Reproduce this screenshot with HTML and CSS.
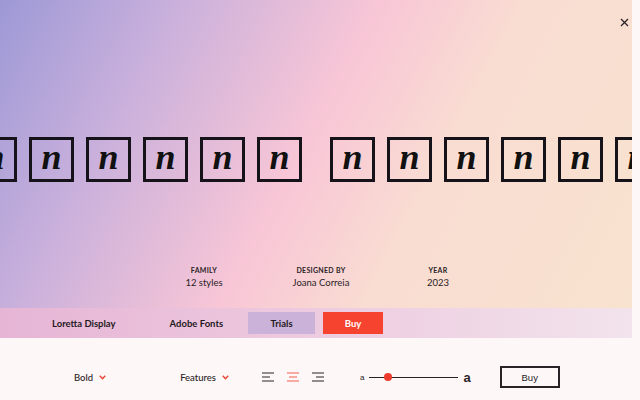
FILE: index.html
```html
<!DOCTYPE html>
<html lang="en">
<head>
  <meta charset="UTF-8" />
  <meta name="viewport" content="width=device-width, initial-scale=1.0"/>
  <title>Loretta Display</title>
  <link rel="stylesheet" href="styles.css">
</head>
<body>
  <div class="page">
    <div class="hero">
      <button class="close" aria-label="Close">
        <svg width="9" height="9" viewBox="0 0 9 9"><path d="M1 1L8 8M8 1L1 8" stroke="#2a2226" stroke-width="1.3" fill="none"/></svg>
      </button>

      <div class="glyphs">
        <div class="group">
          <span class="glyph">n</span><span class="glyph">n</span><span class="glyph">n</span>
          <span class="glyph">n</span><span class="glyph">n</span><span class="glyph">n</span>
        </div>
        <div class="group">
          <span class="glyph">n</span><span class="glyph">n</span><span class="glyph">n</span>
          <span class="glyph">n</span><span class="glyph">n</span><span class="glyph">n</span>
        </div>
      </div>

      <div class="meta">
        <div class="meta-item">
          <div class="meta-label">FAMILY</div>
          <div class="meta-value">12 styles</div>
        </div>
        <div class="meta-item">
          <div class="meta-label">DESIGNED BY</div>
          <div class="meta-value">Joana Correia</div>
        </div>
        <div class="meta-item">
          <div class="meta-label">YEAR</div>
          <div class="meta-value">2023</div>
        </div>
      </div>
    </div>

    <nav class="nav">
      <a class="nav-link name">Loretta Display</a>
      <a class="nav-link adobe">Adobe Fonts</a>
      <a class="nav-btn trials">Trials</a>
      <a class="nav-btn buy">Buy</a>
    </nav>

    <div class="toolbar">
      <div class="dropdown weight">Bold
        <svg width="7" height="5" viewBox="0 0 7 5"><path d="M0.8 0.8L3.5 3.8L6.2 0.8" stroke="#e8432f" stroke-width="1.4" fill="none"/></svg>
      </div>
      <div class="dropdown features">Features
        <svg width="7" height="5" viewBox="0 0 7 5"><path d="M0.8 0.8L3.5 3.8L6.2 0.8" stroke="#e8432f" stroke-width="1.4" fill="none"/></svg>
      </div>

      <div class="align">
        <svg width="12" height="10" viewBox="0 0 12 10"><path d="M0 1H12M0 5H8M0 9H12" stroke="#2a2226" stroke-width="1.1"/></svg>
        <svg width="12" height="10" viewBox="0 0 12 10"><path d="M0 1H12M2 5H10M0 9H12" stroke="#f0604f" stroke-width="1.1"/></svg>
        <svg width="12" height="10" viewBox="0 0 12 10"><path d="M0 1H12M4 5H12M0 9H12" stroke="#2a2226" stroke-width="1.1"/></svg>
      </div>

      <div class="size">
        <span class="a-small">a</span>
        <div class="track"><span class="thumb"></span></div>
        <span class="a-big">a</span>
      </div>

      <button class="buy-outline">Buy</button>
    </div>
  </div>
</body>
</html>
```

FILE: styles.css
```css
body {
  margin: 0;
  background: #fdf8f7;
  font-family: Lato, "Open Sans", sans-serif;
  color: #1f1a1d;
}

.page {
  width: 632px;
}

.hero {
  position: relative;
  height: 308px;
  overflow: hidden;
  background: linear-gradient(118deg, #9d99d6 0%, #c9b0dc 22%, #f8c6d6 48%, #f9dcd2 66%, #f8e3cf 100%);
}

.close {
  position: absolute;
  top: 15px;
  right: 1px;
  width: 13px;
  height: 12px;
  padding: 0;
  border: none;
  background: none;
  cursor: pointer;
}

/* row of glyph tiles, first one bleeds off the left edge */
.glyphs {
  display: flex;
  gap: 28px;
  margin-left: -28px;
  padding-top: 137px;
}

.group {
  display: flex;
  gap: 12px;
}

.glyph {
  box-sizing: border-box;
  width: 45px;
  height: 45px;
  flex: none;
  border: 3px solid #16121a;
  display: flex;
  justify-content: center;
  align-items: center;
  font-family: "Liberation Serif", serif;
  font-style: italic;
  font-weight: bold;
  font-size: 36px;
  line-height: 1;
  padding-bottom: 6px;
  color: #111;
}

.meta {
  display: flex;
  margin-top: 84px;
  padding-left: 164px;
}

.meta-item {
  width: 80px;
  text-align: center;
  margin-right: 37px;
}

.meta-label {
  font-size: 7px;
  font-weight: bold;
  letter-spacing: 0.3px;
  color: #2a2226;
}

.meta-value {
  font-size: 9.5px;
  margin-top: 3px;
  color: #2a2226;
}

.nav {
  display: flex;
  align-items: center;
  height: 30px;
  background: linear-gradient(90deg, #e6b5d5 0%, #ecc6dd 40%, #f2e3ec 100%);
  font-size: 9.5px;
  font-weight: bold;
}

.nav-link {
  color: #1f1a1d;
}

.name {
  margin-left: 52px;
}

.adobe {
  margin-left: 54px;
}

.nav-btn {
  height: 22px;
  display: flex;
  align-items: center;
  justify-content: center;
}

.trials {
  width: 67px;
  margin-left: 25px;
  background: #cbb2d8;
}

.buy {
  width: 60px;
  margin-left: 8px;
  background: #f5432f;
  color: #fff;
}

.toolbar {
  width: 640px;
  display: flex;
  align-items: center;
  height: 22px;
  padding: 28px 0 12px 74px;
  font-size: 9.5px;
  color: #2a2226;
}

.dropdown {
  display: flex;
  align-items: center;
  gap: 6px;
  font-weight: 500;
}

.features {
  margin-left: 74px;
}

.align {
  display: flex;
  gap: 13px;
  margin-left: 33px;
}

.size {
  display: flex;
  align-items: center;
  margin-left: 36px;
}

.a-small {
  font-family: "Liberation Sans", sans-serif;
  font-size: 8px;
}

.a-big {
  font-family: "Liberation Sans", sans-serif;
  font-size: 13px;
  font-weight: bold;
  margin-left: 5px;
}

.track {
  position: relative;
  width: 89px;
  height: 1px;
  margin-left: 5px;
  background: #2a2226;
}

.thumb {
  position: absolute;
  left: 15px;
  top: -3.5px;
  width: 8px;
  height: 8px;
  border-radius: 50%;
  background: #ee3a2c;
}

.buy-outline {
  margin-left: 29px;
  width: 60px;
  height: 22px;
  border: 2px solid #2a2226;
  background: none;
  font-family: "Liberation Sans", sans-serif;
  font-size: 9.5px;
  color: #2a2226;
}
```
